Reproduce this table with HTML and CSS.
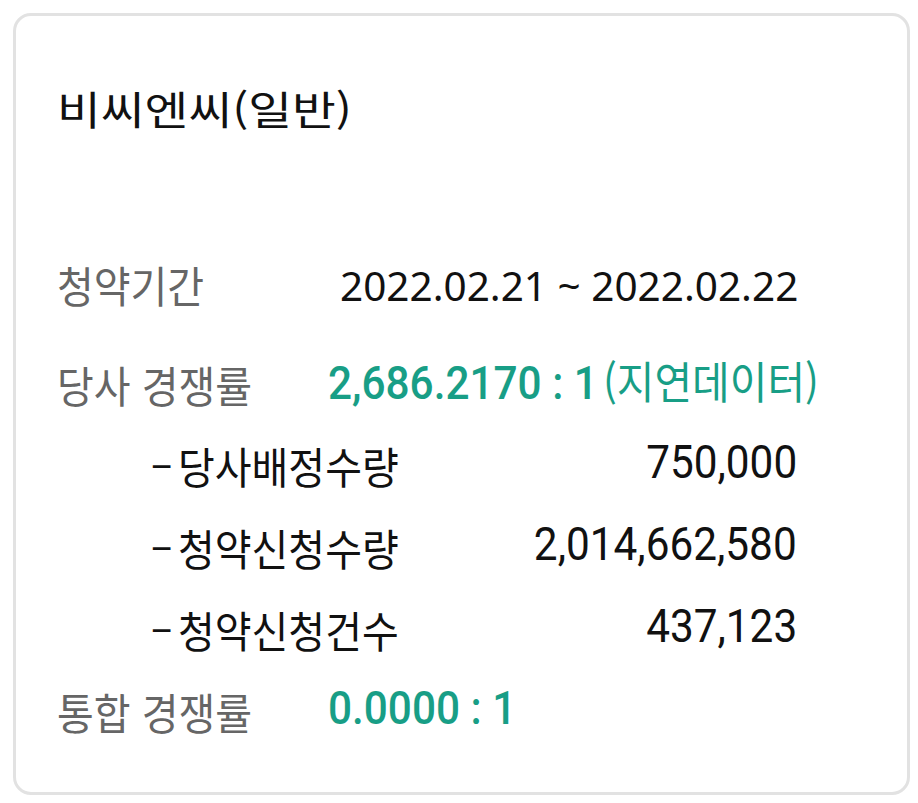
FILE: index.html
```html
<!DOCTYPE html>
<html lang="ko">
<head>
<meta charset="utf-8">
<link rel="stylesheet" href="styles.css">
</head>
<body>
<div class="card">
  <h1 class="title"><span class="title-text">비씨엔씨(일반)</span></h1>
  <div class="rows">
    <div class="row row-first">
      <span class="label"><span class="ko">청약기간</span></span>
      <span class="value date">2022.02.21 ~ 2022.02.22</span>
    </div>
    <div class="row">
      <span class="label"><span class="ko">당사 경쟁률</span></span>
      <span class="value"><span class="green">2,686.2170 : 1</span><span class="note">(지연데이터)</span></span>
    </div>
    <div class="row sub">
      <span class="label sublabel"><span class="dash">–</span><span class="ko">당사배정수량</span></span>
      <span class="value"><span class="num">750,000</span></span>
    </div>
    <div class="row sub">
      <span class="label sublabel"><span class="dash">–</span><span class="ko">청약신청수량</span></span>
      <span class="value"><span class="num">2,014,662,580</span></span>
    </div>
    <div class="row sub">
      <span class="label sublabel"><span class="dash">–</span><span class="ko">청약신청건수</span></span>
      <span class="value"><span class="num">437,123</span></span>
    </div>
    <div class="row">
      <span class="label"><span class="ko">통합 경쟁률</span></span>
      <span class="value"><span class="green">0.0000 : 1</span></span>
    </div>
  </div>
</div>
</body>
</html>
```
FILE: styles.css
```css
* { box-sizing: border-box; }
html, body { margin: 0; padding: 0; background: #ffffff; }
body {
  font-family: "Noto Sans CJK KR", "Noto Sans", sans-serif;
  width: 918px;
  height: 803px;
  overflow: hidden;
}
.card {
  margin: 13px 0 0 13px;
  width: 897px;
  height: 782px;
  border: 3px solid #e2e2e2;
  border-radius: 18px;
  padding: 62px 110px 0 41px;
}
.title {
  margin: 0;
  font-size: 40px;
  font-weight: 400;
  line-height: 60px;
  color: #111111;
  white-space: nowrap;
}
.title-text {
  display: inline-block;
  transform: scaleX(1.19);
  transform-origin: left center;
}
.rows {
  margin-top: 105px;
  display: flex;
  flex-direction: column;
}
.row {
  display: grid;
  grid-template-columns: 271px 1fr;
  height: 82px;
  align-items: center;
  white-space: nowrap;
}
.row-first { margin-bottom: 14px; }
.label {
  font-size: 43px;
  color: #666666;
  line-height: 82px;
}
.ko {
  display: inline-block;
  transform: scaleX(0.93);
  transform-origin: left center;
  vertical-align: 4px;
}
.sublabel {
  color: #111111;
  padding-left: 93px;
}
.dash {
  display: inline-block;
  font-family: Roboto, sans-serif;
  font-size: 36px;
  width: 28px;
  vertical-align: 8px;
}
.row.sub { grid-template-columns: 1fr auto; }
.value { color: #111111; line-height: 82px; }
.date {
  font-family: "Noto Sans", sans-serif;
  font-size: 40.5px;
  padding-left: 12px;
}
.green {
  display: inline-block;
  font-family: Roboto, sans-serif;
  font-weight: 500;
  font-size: 46px;
  color: #189e86;
  transform: scaleX(0.92);
  transform-origin: left center;
  margin-right: -18px;
}
.note {
  display: inline-block;
  font-family: "Noto Sans CJK KR", sans-serif;
  font-weight: 400;
  font-size: 44px;
  color: #189e86;
  transform: scaleX(0.93);
  transform-origin: left center;
}
.num {
  display: inline-block;
  font-family: Roboto, sans-serif;
  font-size: 46px;
  transform: scaleX(0.92);
  transform-origin: right center;
}
```
